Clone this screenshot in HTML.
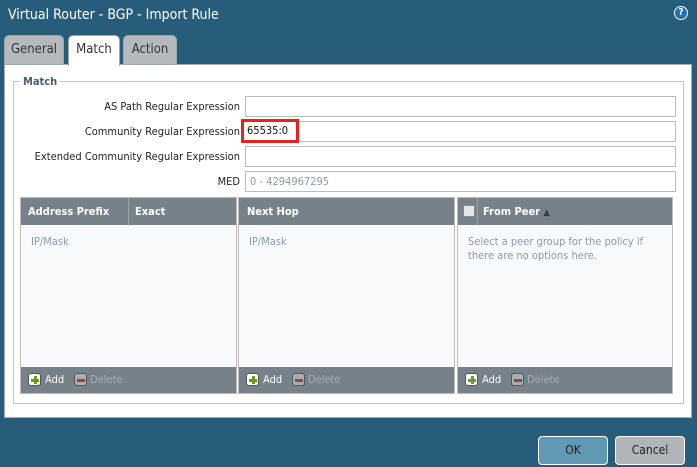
<!DOCTYPE html>
<html><head><style>
*{box-sizing:border-box;margin:0;padding:0}
body{width:697px;height:467px;background:#275d7a;font-family:"DejaVu Sans Condensed","Liberation Sans",sans-serif;font-size:11px;color:#333;position:relative;overflow:hidden}
.abs{position:absolute}
.title{left:8px;top:7px;color:#fff;font-size:14px;font-family:"DejaVu Sans Condensed","Liberation Sans",sans-serif}
.help{left:674px;top:6px;width:14px;height:14px;border-radius:50%;background:#1d6fb0;border:1.5px solid #fff;color:#fff;font-size:10px;font-weight:bold;text-align:center;line-height:11px}
.tab{top:35px;height:30px;border-radius:5px 5px 0 0;background:#b6b9bc;border:1px solid #9aa;font-size:13px;color:#333;text-align:center;line-height:28px}
.panel{left:4px;top:64px;width:688px;height:354px;background:#fff;border:1px solid #aab}
.fs{left:13px;top:81px;width:671px;height:323px;border:1px solid #c4c4c4}
.legend{left:20px;top:75px;background:#fff;padding:0 3px;font-weight:bold;color:#4d5a66;font-size:11px}
.lbl{right:457px;font-size:11px;color:#222;text-align:right}
.inp{left:245px;width:431px;height:21px;border:1px solid #bbb;background:#fff;font-size:11px;padding:3px 4px;color:#222}
.grid{top:197px;height:197px;border:1px solid #bbb;background:#f8f9fb}
.gh{position:absolute;left:0;right:0;top:0;height:27px;background:#76818a;color:#fff;font-weight:bold;font-size:11px}
.gf{position:absolute;left:0;right:0;bottom:0;height:26px;background:#76818a;color:#fff;font-size:11px}
.ph{position:absolute;color:#8a99a6;font-size:11px}
.plus,.minus{position:absolute;top:6px;width:13px;height:13px;border-radius:3px;border:1px solid #555}
.plus{background:#fff}
.plus:before{content:"";position:absolute;left:5px;top:2px;width:3px;height:8px;background:#6c9a1f}
.plus:after{content:"";position:absolute;left:2px;top:5px;width:8px;height:3px;background:#6c9a1f}
.minus{background:#a9aeb2}
.minus:after{content:"";position:absolute;left:2px;top:5px;width:8px;height:3px;background:#8a4a44}
.btn{top:436px;width:70px;height:29px;border:1.5px solid #fff;border-radius:4px;text-align:center;line-height:26px;font-size:12px;color:#222}
</style></head><body>
<div class="abs title">Virtual Router - BGP - Import Rule</div>
<div class="abs help">?</div>
<div class="abs panel"></div>
<div class="abs tab" style="left:4px;width:60px">General</div>
<div class="abs tab" style="left:123px;width:54px">Action</div>
<div class="abs tab" style="left:68px;width:52px;background:#fff;height:31px;border-bottom:none">Match</div>
<div class="abs fs"></div>
<div class="abs legend">Match</div>
<div class="abs lbl" style="top:100px">AS Path Regular Expression</div>
<div class="abs lbl" style="top:125px">Community Regular Expression</div>
<div class="abs lbl" style="top:150px">Extended Community Regular Expression</div>
<div class="abs lbl" style="top:175px">MED</div>
<div class="abs inp" style="top:96px"></div>
<div class="abs inp" style="top:121px"></div>
<div class="abs" style="left:241px;top:119px;width:58px;height:24px;border:3px solid #e8231f;padding:2px 3px;font-size:11px;color:#111;background:#fff">65535:0</div>
<div class="abs inp" style="top:146px"></div>
<div class="abs inp" style="top:171px;color:#8a99a6">0 - 4294967295</div>

<div class="abs grid" style="left:20px;width:217px">
 <div class="gh"><span style="position:absolute;left:7px;top:7px">Address Prefix</span><span style="position:absolute;left:107px;top:0;height:27px;border-left:1px solid #9aa3aa"></span><span style="position:absolute;left:114px;top:7px">Exact</span></div>
 <div class="ph" style="left:10px;top:37px">IP/Mask</div>
 <div class="gf"><span class="plus" style="left:7px"></span><span style="position:absolute;left:24px;top:6px">Add</span><span class="minus" style="left:53px"></span><span style="position:absolute;left:69px;top:6px;color:#a5acb2">Delete</span></div>
</div>
<div class="abs grid" style="left:238px;width:217px">
 <div class="gh"><span style="position:absolute;left:8px;top:7px">Next Hop</span></div>
 <div class="ph" style="left:10px;top:37px">IP/Mask</div>
 <div class="gf"><span class="plus" style="left:7px"></span><span style="position:absolute;left:24px;top:6px">Add</span><span class="minus" style="left:53px"></span><span style="position:absolute;left:69px;top:6px;color:#a5acb2">Delete</span></div>
</div>
<div class="abs grid" style="left:457px;width:216px">
 <div class="gh"><span style="position:absolute;left:5px;top:7px;width:12px;height:12px;border:1px solid #888;background:#e4e6e8"></span><span style="position:absolute;left:19px;top:0;height:27px;border-left:1px solid #9aa3aa"></span><span style="position:absolute;left:25px;top:7px">From Peer <span style="color:#2e3a44;font-size:9px">▲</span></span></div>
 <div class="ph" style="left:10px;top:37px;line-height:14px">Select a peer group for the policy if<br>there are no options here.</div>
 <div class="gf"><span class="plus" style="left:7px"></span><span style="position:absolute;left:24px;top:6px">Add</span><span class="minus" style="left:53px"></span><span style="position:absolute;left:69px;top:6px;color:#a5acb2">Delete</span></div>
</div>

<div class="abs btn" style="left:538px;background:#6199b4">OK</div>
<div class="abs btn" style="left:615px;background:#b1b5ba">Cancel</div>
</body></html>
